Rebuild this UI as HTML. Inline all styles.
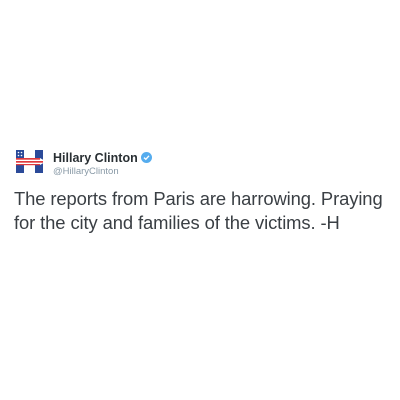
<!DOCTYPE html>
<html><head><style>
body{margin:0;width:400px;height:400px;background:#fff;position:relative;font-family:"Liberation Sans",Arial,sans-serif;overflow:hidden}
.name{position:absolute;left:53px;top:151px;font-size:12.5px;font-weight:bold;color:#292f33}
.badge{display:inline-block;width:11px;height:11px;border-radius:50%;background:#55acee;vertical-align:-1px;margin-left:3px;position:relative}
.handle{position:absolute;left:53px;top:166px;font-size:9.5px;color:#8899a6}
.text{position:absolute;left:14px;top:187px;font-size:18.4px;line-height:24px;color:#3a3f44;white-space:nowrap;letter-spacing:-0.1px}
</style></head><body>
<svg style="position:absolute;left:16px;top:150px" width="30" height="23" viewBox="0 0 30 23">
<rect x="0" y="0" width="8" height="23" fill="#2b4a99"/>
<rect x="19" y="0" width="8" height="23" fill="#2b4a99"/>
<polygon points="0,8 24,8 30,11.5 24,15 0,15" fill="#fff"/>
<rect x="0" y="8" width="24" height="1.7" fill="#e03a3e"/>
<rect x="0" y="11" width="27" height="1.7" fill="#e03a3e"/>
<rect x="0" y="14" width="24" height="1.2" fill="#e03a3e"/>
<circle cx="2.5" cy="2.5" r="0.8" fill="#fff"/><circle cx="5.5" cy="2.5" r="0.8" fill="#fff"/>
<circle cx="2.5" cy="5.5" r="0.8" fill="#fff"/><circle cx="5.5" cy="5.5" r="0.8" fill="#fff"/>
</svg>
<div class="name">Hillary Clinton<span class="badge"><svg width="11" height="11" viewBox="0 0 11 11" style="position:absolute;left:0;top:0"><path d="M3 5.6 L4.8 7.3 L8 3.8" stroke="#fff" stroke-width="1.4" fill="none"/></svg></span></div>
<div class="handle">@HillaryClinton</div>
<div class="text">The reports from Paris are harrowing. Praying<br>for the city and families of the victims. -H</div>
</body></html>
